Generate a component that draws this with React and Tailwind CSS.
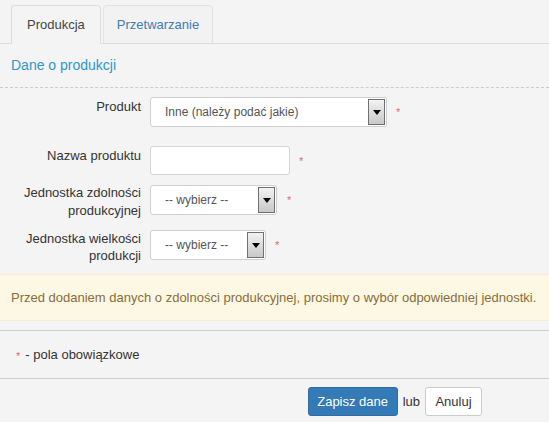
import React from "react";

function Arrow() {
  return (
    <div className="absolute right-[1px] top-[1px] bottom-[1px] w-[17px] border border-[#707070] bg-gradient-to-b from-[#f2f2f2] to-[#c8c8c8] flex items-center justify-center">
      <svg width="8" height="5" viewBox="0 0 8 5"><path d="M0 0 H8 L4 5 Z" fill="#000" /></svg>
    </div>
  );
}

function Select({ w, text }) {
  return (
    <div className={`relative h-[30px] ${w} bg-white border border-[#cfcfcf] rounded-[3px] text-[12px] text-[#555] flex items-center pl-[14px]`}>
      {text}
      <Arrow />
    </div>
  );
}

function Star({ cls }) {
  return <span className={`text-[#e06a76] text-[11px] leading-none ${cls}`}>*</span>;
}

export default function App() {
  return (
    <div className="w-[549px] h-[422px] overflow-hidden bg-[#f4f4f4] text-[13px] text-[#333]" style={{ fontFamily: '"Liberation Sans", Arial, sans-serif' }}>
      <div className="flex pl-[11px] pt-[5px] gap-[2px] border-b border-[#dcdcdc]">
        <div className="h-[39px] mb-[-1px] px-[15px] flex items-center bg-[#f4f4f4] border border-[#dcdcdc] border-b-[#f4f4f4] rounded-t-[4px] text-[#444]">Produkcja</div>
        <div className="h-[38px] px-[13px] flex items-center bg-[#f2f2f2] border border-[#e2e2e2] border-b-0 rounded-t-[4px] text-[#3f7cb4]">Przetwarzanie</div>
      </div>
      <div className="pl-[11px] pt-[13px] pb-[13px] text-[14px] text-[#2d97cf] leading-[17px]">Dane o produkcji</div>
      <div className="border-t border-dashed border-[#cccccc]" />

      <div className="pt-[9px] flex flex-col">
        <div className="flex items-start">
          <div className="w-[141px] text-right pt-[1px] leading-[18px]">Produkt</div>
          <div className="ml-[9px]"><Select w="w-[237px]" text="Inne (należy podać jakie)" /></div>
          <Star cls="ml-[9px] mt-[10px]" />
        </div>

        <div className="flex items-start mt-[19px]">
          <div className="w-[141px] text-right pt-[1px] leading-[18px]">Nazwa produktu</div>
          <div className="ml-[9px] w-[140px] h-[29px] bg-white border border-[#d4d4d4] rounded-[3px]" />
          <Star cls="ml-[9px] mt-[10px]" />
        </div>

        <div className="flex items-start mt-[9px]">
          <div className="w-[141px] text-right leading-[18px]">Jednostka zdolności<br />produkcyjnej</div>
          <div className="ml-[9px] mt-[1px]"><Select w="w-[127px]" text="-- wybierz --" /></div>
          <Star cls="ml-[10px] mt-[11px]" />
        </div>

        <div className="flex items-start mt-[10px]">
          <div className="w-[141px] text-right leading-[17px]">Jednostka wielkości<br />produkcji</div>
          <div className="ml-[9px]"><Select w="w-[116px]" text="-- wybierz --" /></div>
          <Star cls="ml-[9px] mt-[10px]" />
        </div>
      </div>

      <div className="mt-[10px] h-[47px] bg-[#fcf8e3] border-y border-[#f7eed0] flex items-center pl-[11px] text-[#8a6d3b]">
        Przed dodaniem danych o zdolności produkcyjnej, prosimy o wybór odpowiedniej jednostki.
      </div>

      <div className="mt-[9px] border-t border-[#cfcfcf]" />
      <div className="h-[47px] flex items-center pl-[16px]">
        <span className="text-[#e06a76] text-[11px] leading-none mr-[5px] mt-[3px]">*</span>
        <span>- pola obowiązkowe</span>
      </div>
      <div className="border-t border-[#cfcfcf]" />

      <div className="flex justify-end items-start pr-[67px] pt-[8px]">
        <div className="h-[29px] w-[90px] bg-[#337ab7] border border-[#2e6da4] rounded-[3px] text-white flex items-center justify-center">Zapisz dane</div>
        <div className="mx-[5px] mt-[5px]">lub</div>
        <div className="h-[29px] w-[57px] bg-white border border-[#cccccc] rounded-[3px] flex items-center justify-center text-[#333]">Anuluj</div>
      </div>
    </div>
  );
}
